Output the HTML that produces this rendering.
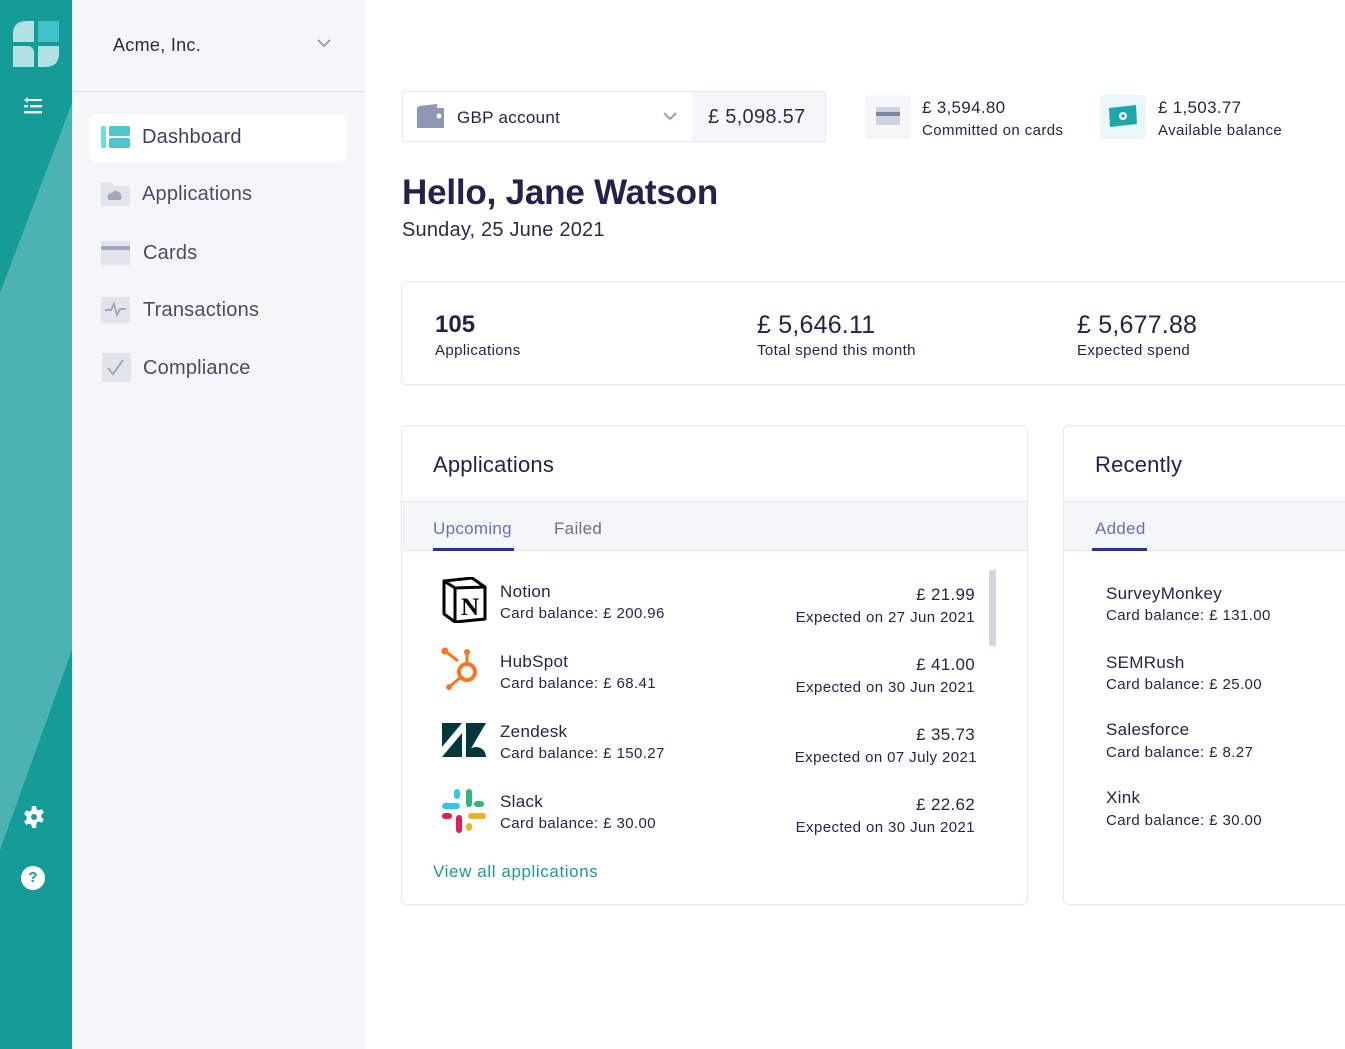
<!DOCTYPE html>
<html><head><meta charset="utf-8"><style>
*{margin:0;padding:0;box-sizing:border-box}
body{width:1345px;height:1049px;overflow:hidden;position:relative;background:#fff;font-family:"Liberation Sans",sans-serif;color:#22224a}
.a{position:absolute;white-space:nowrap}
.rail{left:0;top:0;width:72px;height:1049px;background:#159c99;overflow:hidden}
.side{left:72px;top:0;width:293px;height:1049px;background:#f5f6f8}
.nav{font-size:20px;color:#4b4b6b;letter-spacing:0.2px}
.ic{width:29px;height:24px;background:#e1e4ea;border-radius:2px}
.card{border:1px solid #e4e7ee;border-radius:6px;background:#fff}
.t1{font-size:17px;color:#25254a;letter-spacing:0.3px}
.t2{font-size:15px;color:#25254a;letter-spacing:0.4px}
</style></head><body>
<div class="a rail">
<svg width="72" height="1049" style="position:absolute;left:0;top:0"><polygon points="72,103 72,650 0,850 0,293" fill="#4db3b1"/></svg>
<svg class="a" style="left:13px;top:21px" width="46" height="46" viewBox="0 0 46 46">
<path d="M0 21 V13 Q0 0 14 0 H21 V21 Z" fill="#b2e1e4"/><path d="M25 0 H46 V21 H25 Z" fill="#41c1cc"/>
<path d="M0 25 H14 Q21 25 21 32 V46 H0 Z" fill="#b2e1e4"/><path d="M25 25 H46 V32 Q46 46 32 46 H25 Z" fill="#b2e1e4"/></svg>
<svg class="a" style="left:23px;top:97px" width="20" height="20" viewBox="0 0 20 20" fill="#fff"><path d="M1 3 L5 0 V2 H19 V4 H5 V6 Z"/><rect x="7" y="8" width="12" height="2.4"/><rect x="1" y="8" width="4" height="2.4"/><rect x="1" y="14" width="18" height="2.4"/></svg>
<svg class="a" style="left:22px;top:805px" width="24" height="24" viewBox="0 0 24 24"><path fill="#fff" d="M10 1h4l.6 3.2 2.2 1.2 3-1.3 2 3.4-2.5 2.1v2.6l2.5 2.1-2 3.4-3-1.3-2.2 1.2L14 23h-4l-.6-3.2-2.2-1.2-3 1.3-2-3.4 2.5-2.1v-2.6L2.2 8.7l2-3.4 3 1.3 2.2-1.2z"/><circle cx="12" cy="12" r="3" fill="#159c99"/></svg>
<div class="a" style="left:21px;top:866px;width:24px;height:24px;border-radius:50%;background:#fff;color:#159c99;font-size:15px;font-weight:bold;text-align:center;line-height:24px">?</div>
</div>
<div class="a side">
<div class="a" style="left:41px;top:35px;font-size:18px;color:#2b2b3b;letter-spacing:0.3px">Acme, Inc.</div>
<svg class="a" style="left:245px;top:38px" width="14" height="10"><path d="M1 2 L7 8 L13 2" stroke="#9aa0b6" stroke-width="2" fill="none"/></svg>
<div class="a" style="left:0;top:91px;width:293px;height:1px;background:#dde0ea"></div>
<div class="a" style="left:17px;top:114px;width:258px;height:48px;background:#fff;border-radius:8px"></div>
<svg class="a" style="left:29px;top:126px" width="29" height="22"><rect x="0" y="0" width="5" height="22" rx="1.5" fill="#6fdbe3"/><rect x="8" y="0" width="21" height="10" rx="2" fill="#4ec5cd"/><rect x="8" y="12" width="21" height="10" rx="2" fill="#4ec5cd"/></svg>
<div class="a nav" style="left:70px;top:126px;color:#3f3f63">Dashboard</div>
<svg class="a" style="left:29px;top:182px" width="29" height="24"><path d="M0 0 H10 L13 4 H29 V24 H0Z" fill="#e1e4ea"/><path d="M8 18 a4 4 0 0 1 3-7 a5 5 0 0 1 9 3 a2.5 2.5 0 0 1 -1 4z" fill="#a0a8bb"/></svg>
<div class="a nav" style="left:70px;top:183px">Applications</div>
<div class="a ic" style="left:29px;top:241px"></div><div class="a" style="left:29px;top:246px;width:29px;height:4px;background:#a0a8bb"></div>
<div class="a nav" style="left:71px;top:242px">Cards</div>
<div class="a ic" style="left:29px;top:297px;height:26px"></div><svg class="a" style="left:29px;top:297px" width="29" height="26"><path d="M4 13 H10 L13 7 L16 18 L19 12 H25" stroke="#a0a8bb" stroke-width="2" fill="none"/></svg>
<div class="a nav" style="left:71px;top:299px">Transactions</div>
<div class="a ic" style="left:30px;top:353px;height:29px"></div><svg class="a" style="left:30px;top:353px" width="29" height="29"><path d="M6 15 L11 21 L21 7" stroke="#a0a8bb" stroke-width="2" fill="none"/></svg>
<div class="a nav" style="left:71px;top:357px">Compliance</div>
</div>

<div class="a" style="left:402px;top:91px;width:424px;height:51px;border:1px solid #e4e7ee;border-radius:2px;background:#fff"></div>
<div class="a" style="left:692px;top:92px;width:133px;height:49px;background:#f5f6f8"></div>
<svg class="a" style="left:417px;top:104px" width="27" height="24"><path d="M2 2 L20 0 V4 H27 V24 H0 V4Z" fill="#8f97b4"/><circle cx="22" cy="12" r="2.5" fill="#fff"/></svg>
<div class="a t1" style="left:457px;top:108px">GBP account</div>
<svg class="a" style="left:663px;top:111px" width="14" height="10"><path d="M1 2 L7 8 L13 2" stroke="#9aa0b6" stroke-width="2" fill="none"/></svg>
<div class="a" style="left:708px;top:106px;font-size:20px;color:#2b2b4b;letter-spacing:0.3px">£ 5,098.57</div>
<div class="a" style="left:865px;top:95px;width:46px;height:44px;background:#f5f6f8;border-radius:4px"></div>
<div class="a" style="left:876px;top:107px;width:24px;height:18px;background:#cfd4e2;border-radius:1px"></div><div class="a" style="left:876px;top:112px;width:24px;height:4px;background:#7b84a3"></div>
<div class="a t1" style="left:922px;top:98px">£ 3,594.80</div>
<div class="a t2" style="left:922px;top:122px">Committed on cards</div>
<div class="a" style="left:1100px;top:95px;width:46px;height:44px;background:#eaf7f8;border-radius:4px"></div>
<svg class="a" style="left:1108px;top:104px" width="30" height="24"><path d="M1 4 L28 1 L29 20 L2 23Z" fill="#1fa6a8"/><circle cx="15" cy="12" r="4" fill="#fff"/><circle cx="15" cy="12" r="1.6" fill="#1fa6a8"/></svg>
<div class="a t1" style="left:1158px;top:98px">£ 1,503.77</div>
<div class="a t2" style="left:1158px;top:122px">Available balance</div>

<div class="a" style="left:402px;top:173px;font-size:35px;font-weight:bold;color:#22224a;letter-spacing:-0.2px">Hello, Jane Watson</div>
<div class="a" style="left:402px;top:219px;font-size:20px;color:#2b2b4b;letter-spacing:0.2px">Sunday, 25 June 2021</div>

<div class="a card" style="left:401px;top:281px;width:960px;height:104px;border-radius:4px"></div>
<div class="a" style="left:435px;top:311px;font-size:24px;font-weight:bold">105</div>
<div class="a t2" style="left:435px;top:342px">Applications</div>
<div class="a" style="left:757px;top:311px;font-size:25px;letter-spacing:0.2px">£ 5,646.11</div>
<div class="a t2" style="left:757px;top:342px">Total spend this month</div>
<div class="a" style="left:1077px;top:311px;font-size:25px;letter-spacing:0.2px">£ 5,677.88</div>
<div class="a t2" style="left:1077px;top:342px">Expected spend</div>

<div class="a card" style="left:401px;top:425px;width:627px;height:480px"></div>
<div class="a" style="left:402px;top:501px;width:625px;height:50px;background:#f5f6f9;border-top:1px solid #e4e7ee;border-bottom:1px solid #e4e7ee"></div>
<div class="a" style="left:433px;top:452px;font-size:22px;letter-spacing:0.2px">Applications</div>
<div class="a" style="left:433px;top:519px;font-size:17px;color:#6870b8;letter-spacing:0.3px">Upcoming</div>
<div class="a" style="left:433px;top:548px;width:81px;height:3px;background:#283593"></div>
<div class="a" style="left:554px;top:519px;font-size:17px;color:#6b6f86;letter-spacing:0.3px">Failed</div>
<div class="a" style="left:989px;top:570px;width:7px;height:76px;background:#d1d5dd"></div>

<svg class="a" style="left:441px;top:577px" width="46" height="46" viewBox="0 0 46 46"><path d="M3 4 L31 1 L44 10 V42 L14 45 L3 37Z" fill="#fff" stroke="#000" stroke-width="3" stroke-linejoin="round"/><path d="M3 4 L14 11 L44 10" stroke="#000" stroke-width="3" fill="none"/><path d="M14 11 V45" stroke="#000" stroke-width="3"/><text x="29" y="38" font-family="Liberation Serif" font-weight="bold" font-size="25" text-anchor="middle" fill="#000">N</text></svg>
<div class="a t1" style="left:500px;top:582px">Notion</div><div class="a t2" style="left:500px;top:605px">Card balance: £ 200.96</div>
<div class="a t1" style="left:500px;top:652px">HubSpot</div><div class="a t2" style="left:500px;top:675px">Card balance: £ 68.41</div>
<div class="a t1" style="left:500px;top:722px">Zendesk</div><div class="a t2" style="left:500px;top:745px">Card balance: £ 150.27</div>
<div class="a t1" style="left:500px;top:792px">Slack</div><div class="a t2" style="left:500px;top:815px">Card balance: £ 30.00</div>
<svg class="a" style="left:441px;top:647px" width="42" height="44"><circle cx="4" cy="4" r="3.5" fill="#f57722"/><path d="M4 4 L17 14" stroke="#f57722" stroke-width="3"/><circle cx="26" cy="5" r="3" fill="#f57722"/><path d="M26 5 V16" stroke="#f57722" stroke-width="3"/><circle cx="26" cy="25" r="8" fill="none" stroke="#f57722" stroke-width="4"/><path d="M19 31 L9 39" stroke="#f57722" stroke-width="3"/><circle cx="8" cy="40" r="3" fill="#f57722"/></svg>
<svg class="a" style="left:442px;top:723px" width="44" height="34"><path d="M0 0 H20 L0 24Z M24 0 H44 L24 34Z" fill="#03363d"/><path d="M20 10 V34 H0Z" fill="#03363d"/><path d="M24 34 a10 10 0 0 1 20 0Z" fill="#03363d"/></svg>
<svg class="a" style="left:441px;top:788px" width="46" height="46" viewBox="0 0 46 46" stroke-linecap="round" stroke-width="6"><path d="M4 18 H16" stroke="#36c5f0"/><path d="M16 4 V8" stroke="#36c5f0"/><path d="M28 4 V16" stroke="#2eb67d"/><path d="M40 16 H36" stroke="#2eb67d"/><path d="M30 28 H42" stroke="#ecb22e"/><path d="M28 40 V38" stroke="#ecb22e"/><path d="M18 30 V42" stroke="#e01e5a"/><path d="M4 28 H8" stroke="#e01e5a"/></svg>

<div class="a t1" style="right:370px;top:585px">£ 21.99</div><div class="a t2" style="right:370px;top:609px">Expected on 27 Jun 2021</div>
<div class="a t1" style="right:370px;top:655px">£ 41.00</div><div class="a t2" style="right:370px;top:679px">Expected on 30 Jun 2021</div>
<div class="a t1" style="right:370px;top:725px">£ 35.73</div><div class="a t2" style="right:368px;top:749px">Expected on 07 July 2021</div>
<div class="a t1" style="right:370px;top:795px">£ 22.62</div><div class="a t2" style="right:370px;top:819px">Expected on 30 Jun 2021</div>
<div class="a" style="left:433px;top:862px;font-size:17px;color:#1e9a98;letter-spacing:0.6px">View all applications</div>

<div class="a card" style="left:1063px;top:425px;width:300px;height:480px"></div>
<div class="a" style="left:1064px;top:501px;width:290px;height:50px;background:#f5f6f9;border-top:1px solid #e4e7ee;border-bottom:1px solid #e4e7ee"></div>
<div class="a" style="left:1095px;top:452px;font-size:22px;letter-spacing:0.2px">Recently</div>
<div class="a" style="left:1095px;top:519px;font-size:17px;color:#6870b8;letter-spacing:0.3px">Added</div>
<div class="a" style="left:1092px;top:548px;width:55px;height:3px;background:#283593"></div>
<div class="a t1" style="left:1106px;top:584px">SurveyMonkey</div><div class="a t2" style="left:1106px;top:607px">Card balance: £ 131.00</div>
<div class="a t1" style="left:1106px;top:653px">SEMRush</div><div class="a t2" style="left:1106px;top:676px">Card balance: £ 25.00</div>
<div class="a t1" style="left:1106px;top:720px">Salesforce</div><div class="a t2" style="left:1106px;top:744px">Card balance: £ 8.27</div>
<div class="a t1" style="left:1106px;top:788px">Xink</div><div class="a t2" style="left:1106px;top:812px">Card balance: £ 30.00</div>
</body></html>
